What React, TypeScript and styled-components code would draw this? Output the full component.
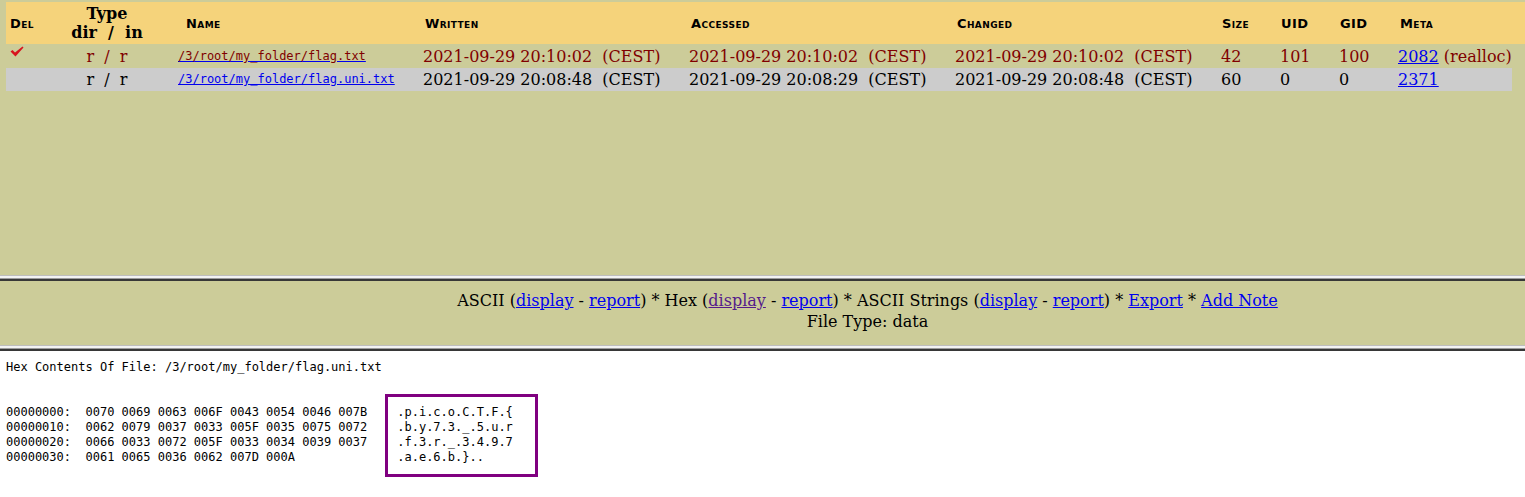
import React from 'react';
import styled, { createGlobalStyle } from 'styled-components';

const Global = createGlobalStyle`
  html, body { margin: 0; padding: 0; background: #ffffff; }
  body { font-family: "DejaVu Serif", serif; font-size: 16px; color: #000; }
`;

const COLS = '60px 82px 273px 266px 266px 266px 59px 59px 59px 116px';
const MAROON = '#800000';
const LINK = '#0000ee';
const VISITED = '#551a8b';

const Page = styled.div`
  width: 1525px;
  height: 497px;
  display: flex;
  flex-direction: column;
  overflow: hidden;
`;

const ListFrame = styled.div`
  height: 275px;
  flex: none;
  box-sizing: border-box;
  background: #cccc99;
  padding: 2px 0 0 6px;
  overflow: hidden;
`;

const HeaderRow = styled.div`
  display: grid;
  grid-template-columns: ${COLS} 1fr;
  width: 1519px;
  height: 42px;
  background: #f5d37b;
`;

const HeadCell = styled.div<{ $pad?: number }>`
  display: flex;
  align-items: center;
  padding-left: ${(p) => p.$pad ?? 4}px;
  font-family: "DejaVu Sans", sans-serif;
  font-weight: bold;
  font-size: 13px;
  font-variant: small-caps;
  letter-spacing: 0.4px;
`;

const TypeHead = styled.div`
  display: flex;
  flex-direction: column;
  align-items: center;
  justify-content: center;
  font-weight: bold;
  font-size: 16px;
  line-height: 19px;
  white-space: pre;
`;

const DataRow = styled.div<{ $shade?: boolean; $red?: boolean }>`
  display: grid;
  grid-template-columns: ${COLS};
  width: 1506px;
  height: 23px;
  margin-top: ${(p) => (p.$shade ? 0 : 1)}px;
  background: ${(p) => (p.$shade ? '#cccccc' : 'transparent')};
  color: ${(p) => (p.$red ? MAROON : '#000')};
  line-height: 19px;
`;

const Cell = styled.div<{ $pad?: number; $center?: boolean; $top?: boolean }>`
  display: flex;
  align-items: ${(p) => (p.$top ? 'flex-start' : 'center')};
  justify-content: ${(p) => (p.$center ? 'center' : 'flex-start')};
  padding-left: ${(p) => p.$pad ?? 2}px;
  white-space: pre;
`;

const PathLink = styled.a<{ $red?: boolean }>`
  font-family: "DejaVu Sans Mono", monospace;
  font-size: 12px;
  color: ${(p) => (p.$red ? MAROON : LINK)};
  text-decoration: underline;
  text-decoration-color: ${LINK};
  cursor: pointer;
`;

const Link = styled.a<{ $visited?: boolean }>`
  color: ${(p) => (p.$visited ? VISITED : LINK)};
  text-decoration: underline;
  cursor: pointer;
`;

const Realloc = styled.span`
  color: ${MAROON};
`;

const Check = styled.svg`
  margin-top: 1px;
  margin-left: 2px;
`;

const FrameBorder = styled.div`
  height: 6px;
  flex: none;
  background: linear-gradient(
    to bottom,
    #bdbdbd 0 1px,
    #f2f2f2 1px 3px,
    #9c9c9c 3px 4px,
    #373737 4px 6px
  );
`;

const ToolFrame = styled.div`
  height: 64px;
  flex: none;
  box-sizing: border-box;
  background: #cccc99;
  padding: 9px 0 0 210px;
  text-align: center;
  line-height: 21px;
  white-space: pre;
`;

const ToolLine = styled.div``;

const ContentFrame = styled.div`
  flex: 1;
  background: #ffffff;
  padding: 9px 0 0 6px;
  font-family: "DejaVu Sans Mono", monospace;
  font-size: 12px;
  line-height: 14px;
`;

const Title = styled.div`
  white-space: pre;
`;

const HexRow = styled.div`
  display: flex;
  align-items: flex-start;
  gap: 18px;
  margin-top: 20px;
`;

const HexBlock = styled.pre`
  margin: 0;
  padding-top: 11px;
  font: inherit;
  line-height: 15px;
`;

const AsciiBox = styled.pre`
  margin: 0;
  width: 153px;
  box-sizing: border-box;
  border: 3px solid #800080;
  padding: 8px 0 9px 9px;
  font: inherit;
  line-height: 15px;
`;

type Row = {
  del: boolean;
  type: string;
  path: string;
  written: string;
  accessed: string;
  changed: string;
  size: string;
  uid: string;
  gid: string;
  meta: string;
  realloc?: boolean;
};

const rows: Row[] = [
  {
    del: true,
    type: 'r  /  r',
    path: '/3/root/my_folder/flag.txt',
    written: '2021-09-29 20:10:02  (CEST)',
    accessed: '2021-09-29 20:10:02  (CEST)',
    changed: '2021-09-29 20:10:02  (CEST)',
    size: '42',
    uid: '101',
    gid: '100',
    meta: '2082',
    realloc: true,
  },
  {
    del: false,
    type: 'r  /  r',
    path: '/3/root/my_folder/flag.uni.txt',
    written: '2021-09-29 20:08:48  (CEST)',
    accessed: '2021-09-29 20:08:29  (CEST)',
    changed: '2021-09-29 20:08:48  (CEST)',
    size: '60',
    uid: '0',
    gid: '0',
    meta: '2371',
  },
];

const hex = `00000000:  0070 0069 0063 006F 0043 0054 0046 007B
00000010:  0062 0079 0037 0033 005F 0035 0075 0072
00000020:  0066 0033 0072 005F 0033 0034 0039 0037
00000030:  0061 0065 0036 0062 007D 000A`;

const ascii = `.p.i.c.o.C.T.F.{
.b.y.7.3._.5.u.r
.f.3.r._.3.4.9.7
.a.e.6.b.}..`;

function CheckMark() {
  return (
    <Check width="14" height="11" viewBox="0 0 14 11">
      <path d="M0.5 5.5 L2.5 4 L5 6.5 L12.5 0.5 L13.5 1.5 L5.5 10.5 Z" fill="#d8141e" />
    </Check>
  );
}

export default function App() {
  return (
    <Page>
      <Global />
      <ListFrame>
        <HeaderRow>
          <HeadCell>Del</HeadCell>
          <TypeHead>
            <span>Type</span>
            <span>{'dir  /  in'}</span>
          </TypeHead>
          <HeadCell $pad={38}>Name</HeadCell>
          <HeadCell>Written</HeadCell>
          <HeadCell>Accessed</HeadCell>
          <HeadCell>Changed</HeadCell>
          <HeadCell $pad={3}>Size</HeadCell>
          <HeadCell $pad={3}>UID</HeadCell>
          <HeadCell $pad={3}>GID</HeadCell>
          <HeadCell>Meta</HeadCell>
          <div />
        </HeaderRow>
        {rows.map((r, i) => (
          <DataRow key={r.path} $shade={i % 2 === 1} $red={r.del}>
            <Cell $top>{r.del ? <CheckMark /> : null}</Cell>
            <Cell $center $pad={0}>{r.type}</Cell>
            <Cell $pad={30}>
              <PathLink $red={r.del}>{r.path}</PathLink>
            </Cell>
            <Cell>{r.written}</Cell>
            <Cell>{r.accessed}</Cell>
            <Cell>{r.changed}</Cell>
            <Cell>{r.size}</Cell>
            <Cell>{r.uid}</Cell>
            <Cell>{r.gid}</Cell>
            <Cell>
              <Link>{r.meta}</Link>
              {r.realloc ? <Realloc> (realloc)</Realloc> : null}
            </Cell>
          </DataRow>
        ))}
      </ListFrame>
      <FrameBorder />
      <ToolFrame>
        <ToolLine>
          ASCII (<Link>display</Link> - <Link>report</Link>) * Hex (
          <Link $visited>display</Link> - <Link>report</Link>) * ASCII Strings (
          <Link>display</Link> - <Link>report</Link>) * <Link>Export</Link> *{' '}
          <Link>Add Note</Link>
        </ToolLine>
        <ToolLine>File Type: data</ToolLine>
      </ToolFrame>
      <FrameBorder />
      <ContentFrame>
        <Title>Hex Contents Of File: /3/root/my_folder/flag.uni.txt</Title>
        <HexRow>
          <HexBlock>{hex}</HexBlock>
          <AsciiBox>{ascii}</AsciiBox>
        </HexRow>
      </ContentFrame>
    </Page>
  );
}
